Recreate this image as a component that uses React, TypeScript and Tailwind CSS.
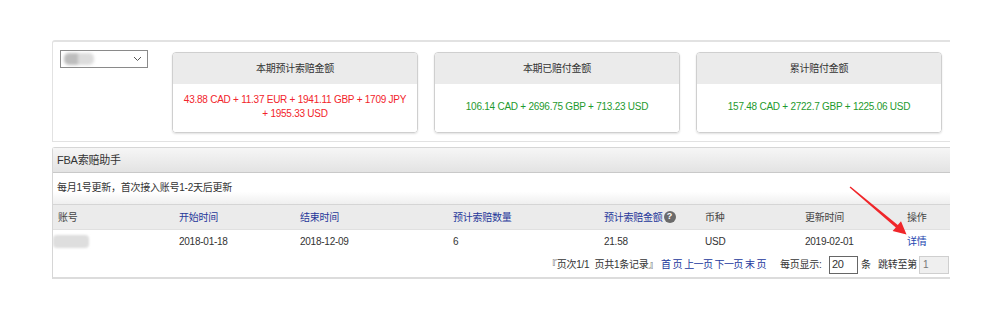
import React from 'react';

const font = { fontFamily: '"Liberation Sans", Arial, "Noto Sans CJK SC", sans-serif' };

const cols = [
  { key: 'acct', label: '账号', w: 'w-[121px]', link: false },
  { key: 'start', label: '开始时间', w: 'w-[121px]', link: true },
  { key: 'end', label: '结束时间', w: 'w-[153px]', link: true },
  { key: 'qty', label: '预计索赔数量', w: 'w-[151px]', link: true },
  { key: 'amt', label: '预计索赔金额', w: 'w-[101px]', link: true },
  { key: 'cur', label: '币种', w: 'w-[100px]', link: false },
  { key: 'upd', label: '更新时间', w: 'w-[102px]', link: false },
  { key: 'op', label: '操作', w: 'w-[60px]', link: false },
];

const row = ['', '2018-01-18', '2018-12-09', '6', '21.58', 'USD', '2019-02-01', '详情'];

function Card({ title, children }: { title: string; children: React.ReactNode }) {
  return (
    <div className="w-[246px] h-[81px] shrink-0 rounded-[4px] border border-[#cfcfcf] shadow-[0_1px_2px_rgba(0,0,0,0.12)] overflow-hidden flex flex-col">
      <div className="h-[31px] bg-[#ebebeb] flex items-center justify-center text-[#333]">{title}</div>
      <div className="flex-1 bg-white flex flex-col items-center justify-center leading-[14px] text-center px-1 pb-[2px] whitespace-nowrap">
        {children}
      </div>
    </div>
  );
}

export default function App() {
  return (
    <div className="relative w-[1001px] h-[322px] bg-white pt-[40px] pl-[52px] text-[10px] tracking-[-0.25px]" style={font}>
      <div className="w-[898px] overflow-hidden">
        {/* 汇总 */}
        <div className="w-[1000px] h-[102px] border-t-2 border-l border-b border-[#e2e2e2] rounded-tl-[3px] flex items-start pt-[8px] pl-[7px]">
          <div className="w-[88px] h-[18px] border border-[#8a8a8a] bg-white flex items-center justify-between pl-[3px] pr-[5px]">
            <div className="flex blur-[1.5px]">
              <div className="w-[14px] h-[12px] rounded-l-[5px] bg-[#bdbdbd]" />
              <div className="w-[16px] h-[12px] rounded-r-[5px] bg-[#dcdcdc]" />
            </div>
            <svg width="9" height="6" viewBox="0 0 9 6"><path d="M1 1l3.5 3.5L8 1" fill="none" stroke="#555" strokeWidth="1" /></svg>
          </div>
          <div className="flex gap-[16px] ml-[24px] mt-[2px]">
            <Card title="本期预计索赔金额">
              <span className="text-[#f2242b]">43.88 CAD + 11.37 EUR + 1941.11 GBP + 1709 JPY</span>
              <span className="text-[#f2242b]">+ 1955.33 USD</span>
            </Card>
            <Card title="本期已赔付金额">
              <span className="text-[#1e9a2e]">106.14 CAD + 2696.75 GBP + 713.23 USD</span>
            </Card>
            <Card title="累计赔付金额">
              <span className="text-[#1e9a2e]">157.48 CAD + 2722.7 GBP + 1225.06 USD</span>
            </Card>
          </div>
        </div>

        {/* FBA索赔助手 */}
        <div className="mt-[5px] w-[1000px] border-l border-t border-[#d6d6d6] rounded-tl-[3px] border-b-2 border-b-[#dcdcdc]">
          <div className="h-[25px] bg-gradient-to-b from-[#f6f6f6] to-[#e3e3e3] border-b border-[#c9c9c9] flex items-center pl-[4px] text-[11px] text-[#333]">
            FBA索赔助手
          </div>
          <div className="h-[32px] bg-gradient-to-b from-white from-60% to-[#efefef] border-b border-[#d5d5d5] flex items-center pl-[4px] pb-[2px] text-[#333]">
            每月1号更新，首次接入账号1-2天后更新
          </div>
          <div className="h-[25px] bg-[#ebebeb] flex items-center border-b border-[#e0e0e0]">
            {cols.map((c) => (
              <div key={c.key} className={`${c.w} shrink-0 pl-[5px] flex items-center ${c.link ? 'text-[#26389a]' : 'text-[#444]'}`}>
                {c.label}
                {c.key === 'amt' && (
                  <span className="ml-[1px] w-[12px] h-[12px] rounded-full bg-[#6b6b6b] text-white text-[9px] font-bold flex items-center justify-center tracking-normal">?</span>
                )}
              </div>
            ))}
          </div>
          <div className="h-[23px] flex items-center bg-white">
            {cols.map((c, i) => (
              <div key={c.key} className={`${c.w} shrink-0 pl-[5px] ${c.key === 'op' ? 'text-[#2447b0]' : 'text-[#333]'}`}>
                {c.key === 'acct' ? (
                  <div className="-ml-[5px] w-[36px] h-[13px] rounded-[4px] bg-[#dedede] blur-[1px]" />
                ) : (
                  row[i]
                )}
              </div>
            ))}
          </div>
          <div className="h-[24px] flex items-center pl-[494px] text-[#333] pb-[1px] whitespace-nowrap">
            <span className="w-[114px] shrink-0">『页次1/1&nbsp; 页共1条记录』</span>
            <span className="w-[119px] shrink-0 text-[#22379c] tracking-[-0.6px]">首 页 上一页 下一页 末 页</span>
            <span className="w-[49px] shrink-0">每页显示:</span>
            <div className="w-[29px] h-[18px] shrink-0 border border-[#666] bg-white flex items-center pl-[2px] text-[11px]">20</div>
            <span className="ml-[3px] w-[17px] shrink-0">条</span>
            <span className="w-[41px] shrink-0">跳转至第</span>
            <div className="w-[30px] h-[18px] shrink-0 border border-[#cfcfcf] bg-[#efefef] flex items-center pl-[3px] text-[#777]">1</div>
          </div>
        </div>
      </div>

      {/* 红色箭头 */}
      <svg className="absolute left-0 top-0 pointer-events-none" width="1001" height="322" viewBox="0 0 1001 322">
        <polygon points="849.6,187.5 850.5,186.5 897.8,225 901,221.3 906.5,234.5 892.6,231 895.8,227.5" fill="#f0262a" />
      </svg>
    </div>
  );
}
